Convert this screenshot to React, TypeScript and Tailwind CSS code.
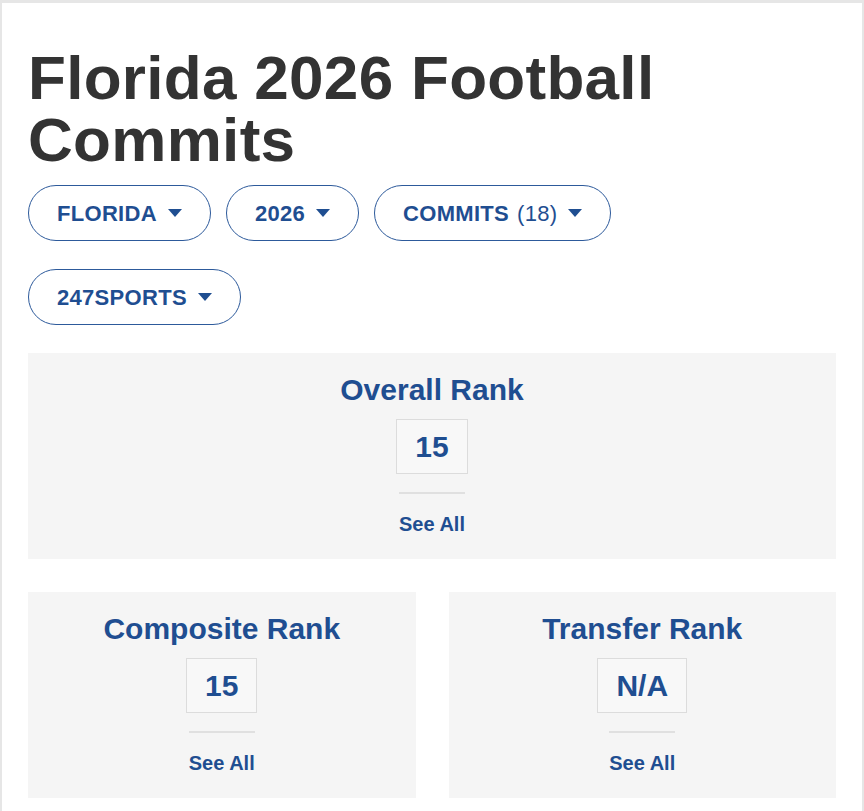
import React from 'react';

const Caret = () => (
  <svg width="14" height="8" viewBox="0 0 14 8" className="shrink-0">
    <path d="M0 0 H14 L7 8 Z" fill="currentColor" />
  </svg>
);

const Pill = ({ label, count }: { label: string; count?: string }) => (
  <button className="flex h-[56px] items-center gap-[11px] rounded-full border-[1.5px] border-[#2d5a9b] bg-white px-[28px] text-[22px] tracking-[0.3px] font-bold text-[#1f4e91]">
    <span>
      {label}
      {count && <span className="ml-[8px] font-normal">{count}</span>}
    </span>
    <Caret />
  </button>
);

const RankCard = ({ title, value }: { title: string; value: string }) => (
  <div className="flex flex-1 flex-col items-center bg-[#f5f5f5] pt-[19px] pb-[22px]">
    <h2 className="text-[30px] leading-[36px] font-bold text-[#1f4e91]">{title}</h2>
    <div className="mt-[11px] flex h-[55px] min-w-[70px] items-center justify-center border border-[#dcdcdc] bg-[#f8f8f8] px-[18px] text-[30px] font-bold text-[#1f4e91]">
      {value}
    </div>
    <div className="mt-[18px] h-[2px] w-[66px] bg-[#e0e0e0]" />
    <a className="mt-[18px] text-[20px] leading-[25px] font-bold text-[#1f4e91]">See All</a>
  </div>
);

export default function App() {
  return (
    <div
      className="min-h-[811px] w-[864px] border-x-2 border-t-[3px] border-[#e6e6e6] bg-white px-[26px] pt-[44px] pb-[14px]"
      style={{ fontFamily: '"Liberation Sans", Arial, sans-serif' }}
    >
      <h1 className="text-[62px] leading-[62px] tracking-[0.3px] font-bold text-[#333333]">
        Florida 2026 Football Commits
      </h1>
      <div className="mt-[14px] flex w-[620px] flex-wrap gap-x-[15px] gap-y-[28px]">
        <Pill label="FLORIDA" />
        <Pill label="2026" />
        <Pill label="COMMITS" count="(18)" />
        <Pill label="247SPORTS" />
      </div>
      <div className="mt-[28px] flex">
        <RankCard title="Overall Rank" value="15" />
      </div>
      <div className="mt-[33px] flex gap-[33px]">
        <RankCard title="Composite Rank" value="15" />
        <RankCard title="Transfer Rank" value="N/A" />
      </div>
    </div>
  );
}
